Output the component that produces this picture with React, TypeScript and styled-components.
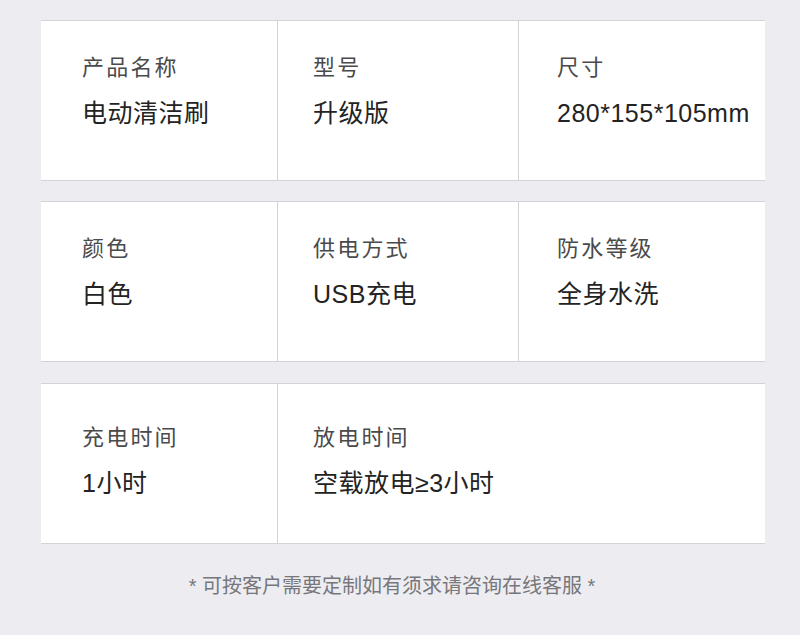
import React from "react";
import styled, { createGlobalStyle } from "styled-components";

const Global = createGlobalStyle`
  html, body {
    margin: 0;
    padding: 0;
    background: #ededf1;
  }
  body {
    font-family: "Liberation Sans", "Noto Sans CJK SC", sans-serif;
  }
`;

const Page = styled.div`
  width: 800px;
  height: 635px;
  box-sizing: border-box;
  padding: 20px 35px 0 41px;
  display: flex;
  flex-direction: column;
  gap: 20px;
`;

const Card = styled.div<{ $cols: string }>`
  display: grid;
  grid-template-columns: ${(p) => p.$cols};
  background: #ffffff;
  border-top: 1px solid #d3d3d7;
  border-bottom: 1px solid #d3d3d7;
  height: 161px;
  box-sizing: border-box;
  & + & + & {
    margin-top: 1px;
  }
`;

const Cell = styled.div<{ $pl: number; $pt: number }>`
  padding: ${(p) => p.$pt}px 0 0 ${(p) => p.$pl}px;
  display: flex;
  flex-direction: column;
  gap: 17px;
  & + & {
    border-left: 1px solid #d3d3d7;
  }
`;

const Label = styled.div`
  font-size: 22px;
  line-height: 26px;
  color: #4a4a4a;
  letter-spacing: 2.2px;
  white-space: nowrap;
`;

const Value = styled.div`
  font-size: 25px;
  line-height: 30px;
  color: #232323;
  letter-spacing: 0.5px;
  white-space: nowrap;
`;

const Note = styled.div`
  margin-top: 9px;
  text-align: center;
  font-size: 20px;
  line-height: 26px;
  color: #77777b;
  padding-right: 22px;
`;

type Item = { label: string; value: string; pl: number };

const rows: { cols: string; pt: number; items: Item[] }[] = [
  {
    cols: "236px 241px 1fr",
    pt: 34,
    items: [
      { label: "产品名称", value: "电动清洁刷", pl: 41 },
      { label: "型号", value: "升级版", pl: 35 },
      { label: "尺寸", value: "280*155*105mm", pl: 38 },
    ],
  },
  {
    cols: "236px 241px 1fr",
    pt: 34,
    items: [
      { label: "颜色", value: "白色", pl: 41 },
      { label: "供电方式", value: "USB充电", pl: 35 },
      { label: "防水等级", value: "全身水洗", pl: 38 },
    ],
  },
  {
    cols: "236px 1fr",
    pt: 41,
    items: [
      { label: "充电时间", value: "1小时", pl: 41 },
      { label: "放电时间", value: "空载放电≥3小时", pl: 35 },
    ],
  },
];

export default function App() {
  return (
    <>
      <Global />
      <Page>
        {rows.map((r, i) => (
          <Card key={i} $cols={r.cols}>
            {r.items.map((it) => (
              <Cell key={it.label} $pl={it.pl} $pt={r.pt}>
                <Label>{it.label}</Label>
                <Value>{it.value}</Value>
              </Cell>
            ))}
          </Card>
        ))}
        <Note>* 可按客户需要定制如有须求请咨询在线客服 *</Note>
      </Page>
    </>
  );
}
